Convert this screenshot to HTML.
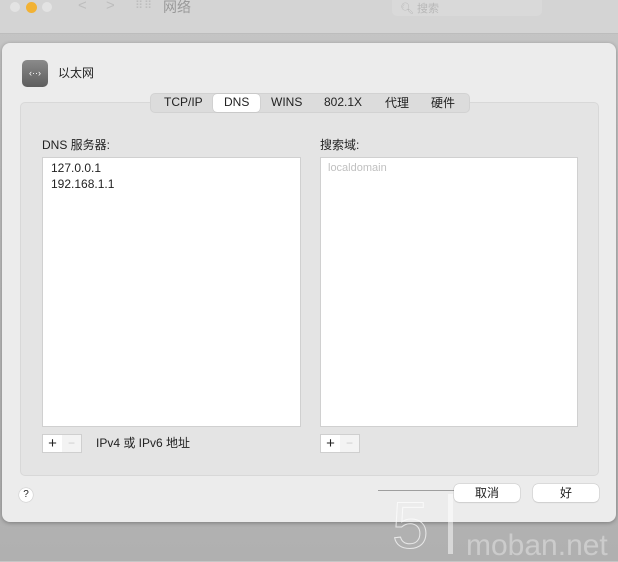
<!DOCTYPE html>
<html><head><meta charset="utf-8"><style>
*{margin:0;padding:0;box-sizing:border-box}
body{width:618px;height:561px;overflow:hidden;background:linear-gradient(#c6c6c6,#b0b0b0);font-family:"Liberation Sans","Noto Sans CJK SC",sans-serif;font-size:12px;color:#222;position:relative}
.top{position:absolute;left:0;top:0;width:618px;height:34px;background:#d4d4d4;border-bottom:1px solid #bdbdbd}
.a{position:absolute}
.sheet{position:absolute;left:2px;top:43px;width:614px;height:479px;background:#ececec;border-radius:8px;box-shadow:0 1px 4px rgba(0,0,0,.3)}
.group{position:absolute;left:18px;top:59px;width:579px;height:374px;background:#e4e4e4;border:1px solid #d8d8d8;border-radius:5px}
.list{position:absolute;background:#fff;border:1px solid #d0d0d0}
.btn{position:absolute;background:#fff;border-radius:5px;box-shadow:0 0 0 .5px #c8c8c8,0 1px 1px rgba(0,0,0,.1);text-align:center;font-size:12px;line-height:18px}
.pm{position:absolute;width:40px;height:19px;border:1px solid #cfcfcf;background:#f3f3f3;display:flex}
.pm span{width:20px;text-align:center;line-height:17px}
</style></head><body>
<div class="top">
 <div class="a" style="left:10px;top:2px;width:10px;height:10px;border-radius:50%;background:#e3e3e3"></div>
 <div class="a" style="left:26px;top:2px;width:11px;height:11px;border-radius:50%;background:#f2b234"></div>
 <div class="a" style="left:42px;top:2px;width:10px;height:10px;border-radius:50%;background:#e3e3e3"></div>
 <div class="a" style="left:78px;top:-3px;color:#bdbdbd;font-size:15px">&lt;</div>
 <div class="a" style="left:106px;top:-3px;color:#bdbdbd;font-size:15px">&gt;</div>
 <div class="a" style="left:135px;top:-1px;color:#bdbdbd;font-size:11px;letter-spacing:1px">⠿⠿</div>
 <div class="a" style="top:-3px;color:#9a9a9a;font-size:14px;left:163px">网络</div>
 <div class="a" style="left:392px;top:-6px;width:150px;height:22px;border-radius:5px;background:#d9d9d9;color:#b8b8b8;font-size:11px;padding:6px 0 0 8px">🔍︎ 搜索</div>
</div>
<div class="sheet">
 <div class="a" style="left:20px;top:17px;width:26px;height:27px;border-radius:5px;background:linear-gradient(#8a8a8a,#5e5e5e);color:#fff;font-size:9px;text-align:center;line-height:27px">‹··›</div>
 <div class="a" style="left:56px;top:21px;font-size:12px">以太网</div>
 <div class="group"></div>
 <div class="a" style="left:148px;top:50px;width:320px;height:20px;background:#dcdcdc;border-radius:5px;border:1px solid #d2d2d2"></div>
 <div class="a" style="left:211px;top:51px;width:47px;height:18px;background:#fff;border-radius:4px;box-shadow:0 0 1px #999"></div>
 <div class="a" style="left:162px;top:52px;font-size:12px">TCP/IP</div>
 <div class="a" style="top:52px;left:222px;font-size:12px">DNS</div>
 <div class="a" style="top:52px;left:269px;font-size:12px">WINS</div>
 <div class="a" style="top:52px;left:322px;font-size:12px">802.1X</div>
 <div class="a" style="top:51px;left:383px;font-size:12px">代理</div>
 <div class="a" style="top:51px;left:429px;font-size:12px">硬件</div>
 <div class="a" style="top:93px;left:40px;font-size:12px">DNS 服务器:</div>
 <div class="a" style="top:93px;left:318px;font-size:12px">搜索域:</div>
 <div class="list" style="left:40px;top:114px;width:259px;height:270px">
  <div style="padding:2px 0 0 8px;line-height:16px;font-size:12px">127.0.0.1<br>192.168.1.1</div></div>
 <div class="list" style="left:318px;top:114px;width:258px;height:270px">
  <div style="padding:2px 0 0 7px;line-height:16px;font-size:11px;color:#c0c0c0">localdomain</div></div>
 <div class="pm" style="left:40px;top:391px"><span style="background:#fff;font-size:15px">+</span><span style="color:#ccc">−</span></div>
 <div class="a" style="left:94px;top:391px;font-size:12px">IPv4 或 IPv6 地址</div>
 <div class="pm" style="left:318px;top:391px"><span style="background:#fff;font-size:15px">+</span><span style="color:#ccc">−</span></div>
 <div class="a" style="left:17px;top:445px;width:14px;height:14px;border-radius:50%;background:#fff;box-shadow:0 0 1px #888;font-size:10px;text-align:center;line-height:14px">?</div>
 <div class="btn" style="left:452px;top:441px;width:66px;height:18px">取消</div>
 <div class="btn" style="left:531px;top:441px;width:66px;height:18px">好</div>
</div>
<div class="a" style="left:392px;top:492px;font-size:66px;color:transparent;-webkit-text-stroke:1px rgba(255,255,255,.7);line-height:66px">5</div>
<div class="a" style="left:378px;top:490px;width:76px;height:1px;background:rgba(80,80,80,.5)"></div>
<div class="a" style="left:448px;top:494px;width:5px;height:60px;background:rgba(255,255,255,.5)"></div>
<div class="a" style="left:466px;top:533px;font-size:30px;color:rgba(255,255,255,.35);line-height:26px">moban.net</div>
</body></html>
